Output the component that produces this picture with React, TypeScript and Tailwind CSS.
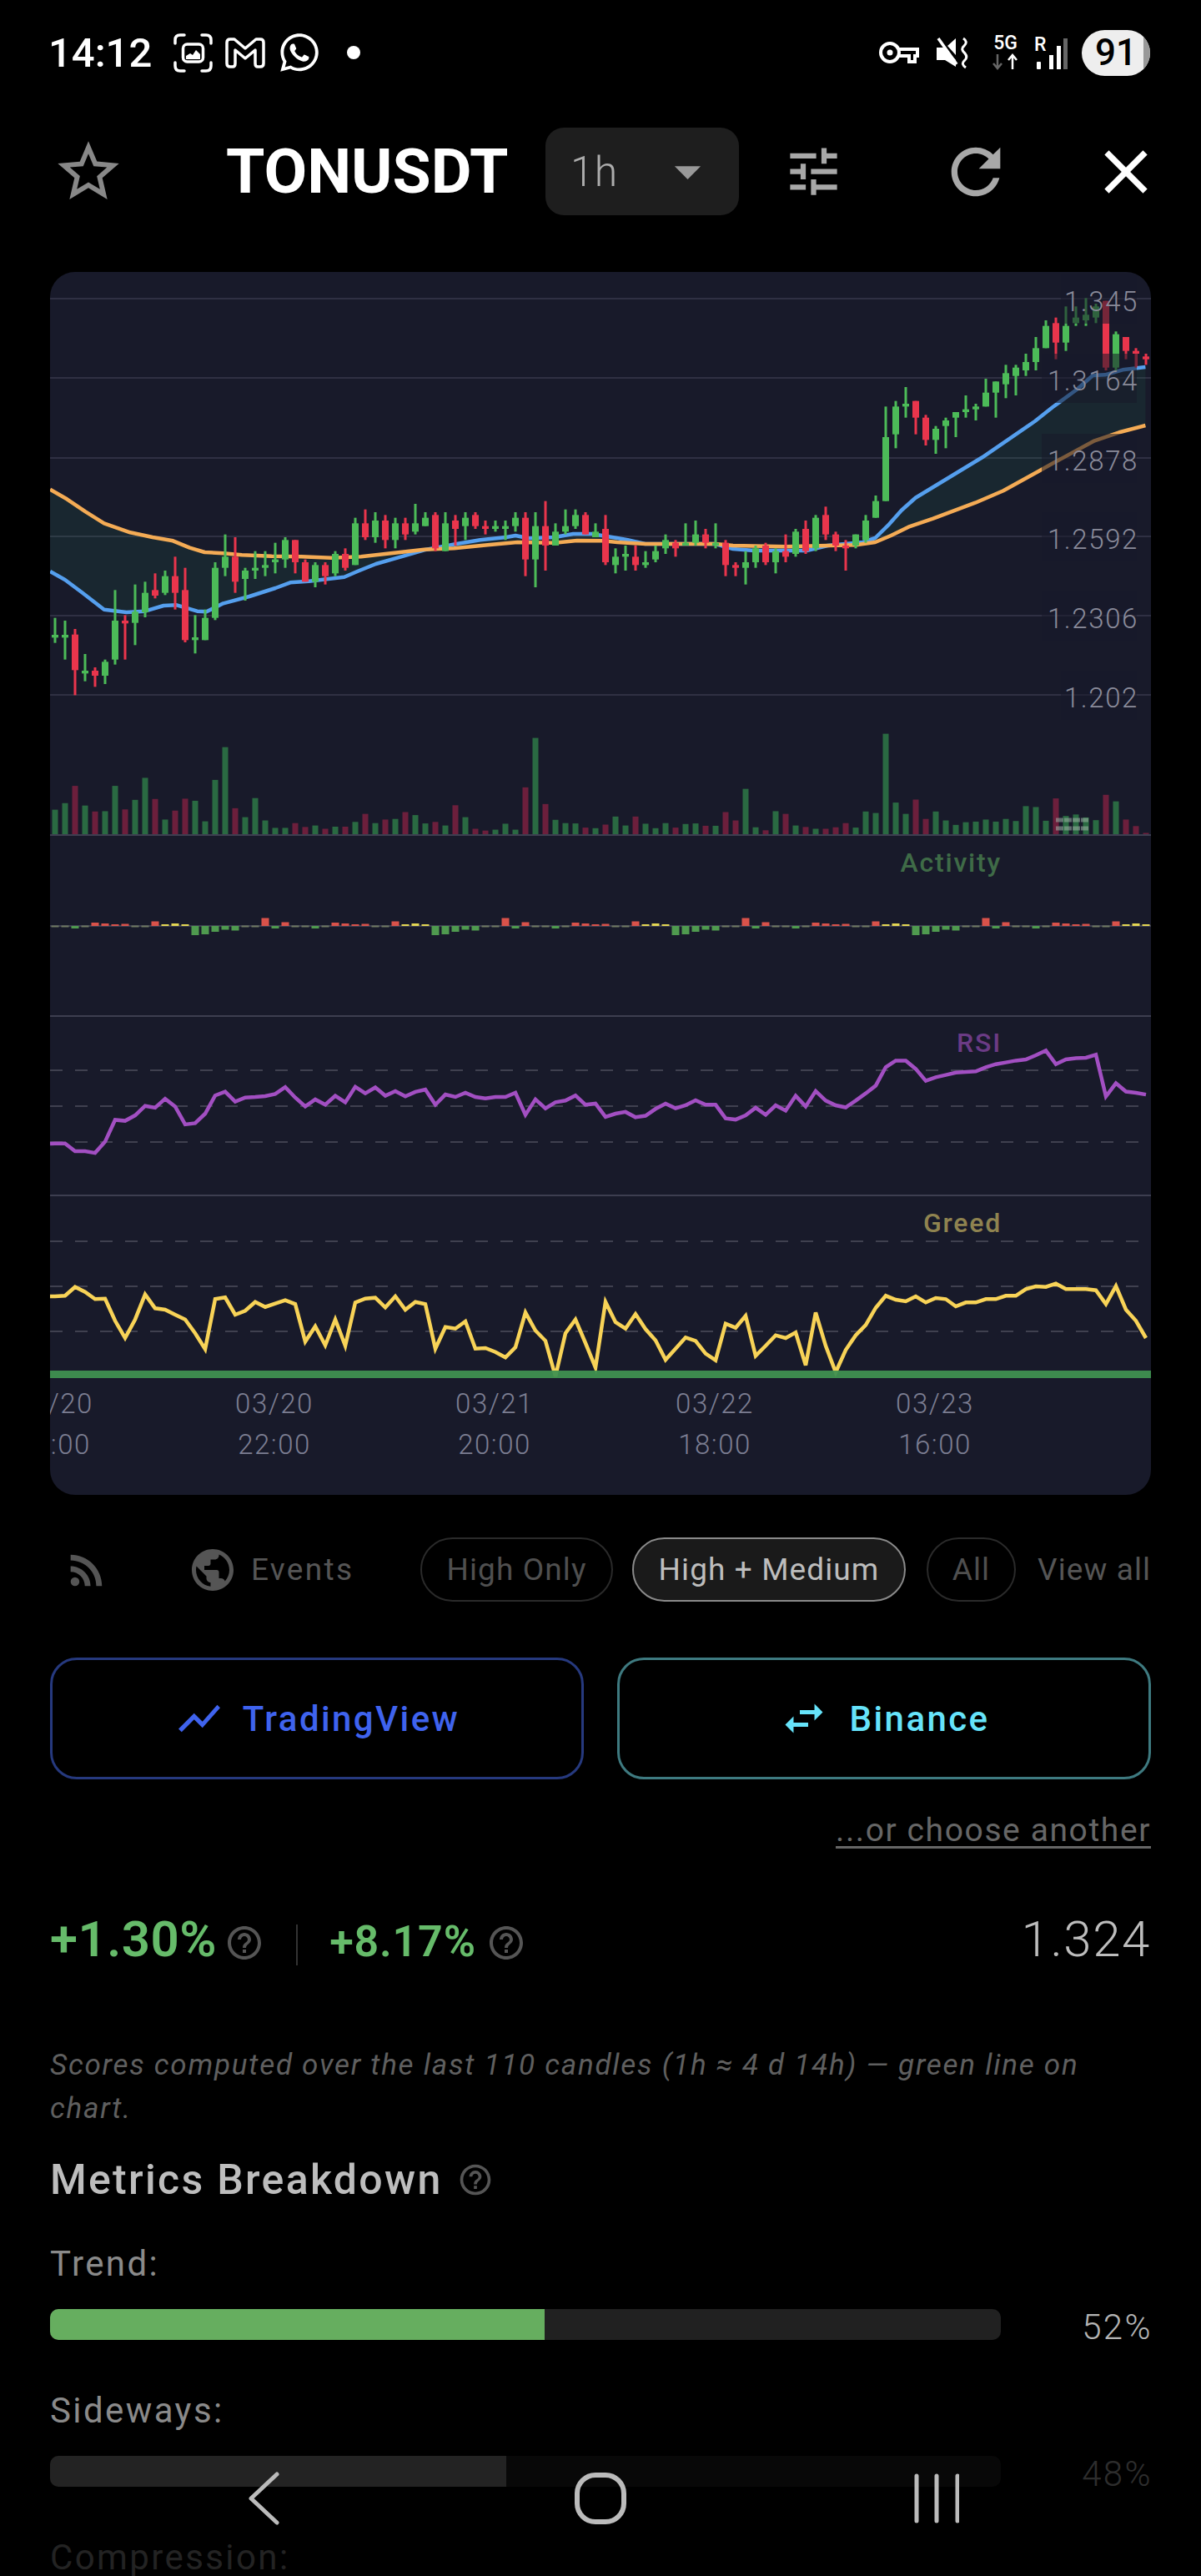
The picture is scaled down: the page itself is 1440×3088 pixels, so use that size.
import { FaWhatsapp } from "react-icons/fa"
import {
  MdArrowDropDown,
  MdClose,
  MdHelpOutline,
  MdPublic,
  MdRefresh,
  MdRssFeed,
  MdShowChart,
  MdStarBorder,
  MdSwapHoriz,
  MdTune,
} from "react-icons/md"

type Candle = [number, number, number, number, "g" | "r"]

// wick top, wick bottom, body top, body bottom (chart units, 1/3 px)
const candles: Candle[] = [
  [1262, 1352, 1323, 1333, "g"], [1272, 1412, 1323, 1333, "g"], [1302, 1540, 1322, 1450, "r"], [1392, 1490, 1452, 1462, "g"],
  [1440, 1510, 1452, 1470, "r"], [1412, 1500, 1420, 1470, "g"], [1162, 1430, 1272, 1412, "g"], [1252, 1412, 1272, 1282, "r"],
  [1142, 1360, 1240, 1280, "g"], [1132, 1260, 1172, 1242, "g"], [1102, 1192, 1162, 1182, "r"], [1092, 1180, 1112, 1172, "g"],
  [1042, 1232, 1112, 1172, "r"], [1082, 1350, 1162, 1342, "r"], [1252, 1390, 1332, 1342, "g"], [1232, 1342, 1262, 1342, "g"],
  [1062, 1270, 1082, 1262, "g"], [962, 1112, 1042, 1082, "g"], [972, 1172, 1042, 1132, "r"], [1082, 1200, 1092, 1122, "g"],
  [1022, 1122, 1082, 1092, "g"], [1022, 1112, 1072, 1082, "g"], [992, 1102, 1052, 1062, "g"], [972, 1082, 982, 1052, "g"],
  [982, 1102, 982, 1062, "r"], [1052, 1132, 1062, 1132, "r"], [1062, 1152, 1072, 1132, "g"], [1062, 1142, 1072, 1112, "r"],
  [1022, 1112, 1032, 1102, "g"], [1012, 1092, 1032, 1082, "r"], [902, 1072, 922, 1072, "g"], [872, 982, 922, 972, "r"],
  [882, 992, 912, 972, "g"], [892, 1012, 912, 982, "r"], [902, 1012, 922, 982, "g"], [902, 982, 922, 962, "r"],
  [852, 962, 922, 952, "g"], [882, 932, 902, 932, "g"], [882, 1022, 892, 1012, "r"], [882, 1022, 922, 1022, "g"],
  [892, 1002, 912, 942, "r"], [882, 982, 902, 932, "g"], [882, 942, 892, 932, "r"], [912, 962, 932, 942, "r"],
  [912, 952, 932, 942, "g"], [912, 982, 932, 942, "g"], [882, 952, 902, 932, "g"], [882, 1112, 902, 1052, "r"],
  [882, 1152, 932, 1052, "g"], [842, 1092, 932, 1002, "r"], [922, 1002, 952, 1002, "g"], [872, 962, 932, 952, "g"],
  [872, 942, 892, 932, "g"], [882, 962, 892, 962, "r"], [922, 972, 952, 972, "g"], [892, 1072, 942, 1062, "r"],
  [1012, 1102, 1042, 1072, "g"], [1002, 1092, 1032, 1042, "g"], [1002, 1092, 1042, 1072, "r"], [1022, 1082, 1062, 1072, "g"],
  [1002, 1062, 1022, 1052, "g"], [962, 1032, 982, 1012, "g"], [982, 1042, 992, 1012, "r"], [922, 1002, 992, 1002, "g"],
  [912, 1002, 962, 992, "g"], [942, 1012, 962, 992, "r"], [922, 1012, 992, 1002, "g"], [982, 1112, 992, 1072, "r"],
  [1062, 1112, 1072, 1082, "r"], [1022, 1142, 1062, 1082, "g"], [1002, 1082, 1012, 1062, "g"], [992, 1072, 1002, 1062, "r"],
  [1012, 1102, 1022, 1062, "g"], [962, 1062, 1022, 1042, "r"], [942, 1042, 952, 1032, "g"], [912, 1032, 942, 1022, "r"],
  [892, 1022, 902, 1012, "g"], [862, 982, 892, 962, "r"], [952, 1022, 962, 1002, "r"], [982, 1092, 1002, 1012, "r"],
  [962, 1012, 962, 1002, "g"], [892, 992, 912, 982, "g"], [822, 902, 842, 902, "g"], [502, 842, 612, 842, "g"],
  [482, 652, 502, 602, "g"], [432, 542, 492, 502, "g"], [482, 602, 482, 542, "r"], [532, 642, 542, 622, "r"],
  [572, 672, 582, 622, "g"], [542, 652, 552, 572, "g"], [522, 612, 522, 542, "g"], [462, 542, 512, 522, "g"],
  [492, 552, 502, 512, "g"], [402, 502, 452, 502, "g"], [412, 542, 412, 452, "g"], [352, 472, 382, 422, "g"],
  [352, 462, 362, 392, "g"], [312, 392, 342, 372, "g"], [252, 372, 292, 342, "g"], [192, 292, 212, 292, "g"],
  [182, 332, 202, 272, "r"], [142, 302, 212, 272, "g"], [142, 212, 182, 202, "g"], [112, 212, 172, 192, "g"],
  [132, 202, 142, 182, "g"], [122, 372, 122, 362, "r"], [232, 372, 242, 362, "g"], [252, 332, 252, 302, "r"],
  [292, 362, 302, 312, "r"], [312, 352, 322, 332, "r"],
]

const volumeTops = [
  367, 345, 287, 353, 373, 372, 287, 366, 334, 260, 331, 400, 370, 330, 337, 406, 267, 157, 362, 392, 328, 403, 428, 428, 412, 425, 420, 431,
  424, 424, 408, 381, 412, 400, 398, 375, 385, 413, 408, 420, 352, 392, 431, 437, 434, 414, 434, 292, 126, 348, 401, 412, 413, 427, 429, 417, 390,
  420, 390, 414, 429, 412, 427, 415, 413, 421, 421, 375, 403, 297, 426, 436, 372, 381, 420, 425, 431, 431, 426, 412, 427, 373, 378, 112, 343, 381,
  333, 398, 373, 403, 418, 409, 407, 400, 407, 398, 405, 355, 358, 404, 329, 388, 383, 393, 402, 317, 339, 400, 422, 445,
]
const volumeRed = new Set([2, 4, 7, 10, 12, 13, 18, 24, 25, 27, 29, 31, 33, 35, 38, 40, 42, 43, 47, 49, 53, 55, 58, 62, 65, 67, 68, 71, 73, 75, 77, 78, 79, 86, 87, 100, 105, 107, 108, 109])

const activityPattern = [0.5, 0.5, -3, 0.5, 4, 3, 2, 2.5, 0.5, 0.5, 5.5, 2, 3, 2, -11, -10, -7, -4.5, -5.5, -0.5, -0.5, 9.5, -3, 4.5]

const rsiValues = [
  1486, 1486, 1512, 1512, 1518, 1480, 1407, 1410, 1392, 1360, 1366, 1336, 1362, 1422, 1418, 1386, 1325, 1312, 1346, 1332, 1330, 1327, 1320, 1297, 1332, 1362, 1338, 1356,
  1326, 1348, 1296, 1318, 1298, 1326, 1310, 1328, 1313, 1305, 1356, 1322, 1330, 1316, 1330, 1335, 1330, 1330, 1316, 1390, 1338, 1368, 1348, 1342, 1325, 1356, 1352, 1397, 1386,
  1380, 1398, 1393, 1370, 1352, 1368, 1358, 1341, 1356, 1356, 1402, 1406, 1392, 1366, 1390, 1358, 1376, 1326, 1362, 1310, 1342, 1358, 1365, 1342, 1318, 1292, 1230, 1208, 1208, 1236,
  1276, 1264, 1256, 1248, 1246, 1244, 1230, 1220, 1214, 1208, 1204, 1190, 1174, 1220, 1204, 1200, 1198, 1188, 1328, 1284, 1312, 1316, 1322,
]

const greedValues = [
  462, 460, 428, 446, 472, 470, 550, 612, 545, 455, 505, 510, 528, 545, 595, 652, 472, 466, 528, 514, 482, 500, 488, 476, 490, 625, 570, 638,
  545, 640, 484, 470, 467, 502, 462, 510, 482, 490, 650, 572, 578, 552, 650, 648, 662, 682, 645, 520, 585, 622, 750, 595, 545, 630, 718, 482, 555,
  578, 526, 580, 620, 690, 650, 610, 622, 668, 692, 560, 575, 532, 676, 640, 602, 612, 592, 710, 520, 640, 735, 655, 602, 565, 503, 460, 474, 480, 462,
  484, 468, 472, 498, 484, 484, 472, 472, 460, 460, 436, 426, 428, 416, 436, 436, 436, 440, 490, 425, 510, 550, 612,
]

const left = (x: number, y: number) => [40 + x / 2.24, 320 + y / 3]
const right = (x: number, y: number) => [740 + x / 2.376, 320 + y / 3]

const slowMa = [
  left(45, 800), left(90, 835), left(140, 880), left(190, 922), left(260, 955), left(320, 972), left(375, 985), left(420, 1010), left(460, 1026), left(510, 1030),
  left(560, 1036), left(640, 1040), left(720, 1042), left(800, 1046), left(880, 1042), left(960, 1030), left(1050, 1016), left(1130, 1012), left(1220, 1000),
  left(1300, 990), left(1400, 992), left(1460, 984), left(1530, 985),
  right(0, 990), right(80, 996), right(140, 996), right(280, 996), right(330, 1002), right(480, 1006), right(600, 1002), right(680, 1000), right(735, 990), right(780, 966),
  right(830, 935), right(900, 905), right(1020, 848), right(1100, 805), right(1200, 735), right(1250, 700), right(1360, 625), right(1430, 595), right(1505, 570),
]

const fastMa = [
  left(45, 1095), left(85, 1125), left(130, 1170), left(190, 1232), left(250, 1242), left(300, 1238), left(350, 1218), left(385, 1216), left(440, 1238), left(465, 1240),
  left(510, 1210), left(580, 1185), left(650, 1155), left(690, 1135), left(740, 1130), left(835, 1115), left(870, 1095), left(920, 1068), left(980, 1045), left(1050, 1018),
  left(1140, 995), left(1200, 982), left(1270, 972), left(1295, 966), left(1330, 976), left(1400, 972), left(1450, 960), left(1500, 960),
  right(0, 975), right(30, 982), right(80, 996), right(280, 996), right(330, 1014), right(390, 1020), right(540, 1020), right(600, 1002), right(700, 990), right(735, 975),
  right(775, 925), right(810, 875), right(850, 830), right(1040, 685), right(1190, 555), right(1240, 505), right(1310, 440), right(1355, 390), right(1390, 388), right(1440, 370), right(1505, 360),
]

const toPoints = (pts: number[][]) => pts.map((p) => `${p[0].toFixed(1)},${p[1].toFixed(1)}`).join(" ")
const candleX = (i: number) => 66 + 12 * i

const priceLabels = [
  { label: "1.345", grid: 358, boxX: 1272 },
  { label: "1.3164", grid: 453, boxX: 1249 },
  { label: "1.2878", grid: 549, boxX: 1249 },
  { label: "1.2592", grid: 643, boxX: 1249 },
  { label: "1.2306", grid: 738, boxX: 1249 },
  { label: "1.202", grid: 833, boxX: 1272 },
]

const timeLabels = [
  { date: "03/20", time: "16:00", x: 65 },
  { date: "03/20", time: "22:00", x: 329 },
  { date: "03/21", time: "20:00", x: 593 },
  { date: "03/22", time: "18:00", x: 857 },
  { date: "03/23", time: "16:00", x: 1121 },
]

function Chart() {
  return (
    <div className="mx-[60px] mt-[68px] h-[1466px] overflow-hidden rounded-[30px] bg-[#181a2a]">
      <svg width="1320" height="1466" viewBox="60 326 1320 1466" className="block">
        {[358, 453, 549, 643, 738, 833].map((y) => (
          <line key={y} x1="60" x2="1380" y1={y} y2={y} stroke="#2f3043" strokeWidth="2" />
        ))}
        <polygon points={toPoints([...fastMa, ...[...slowMa].reverse()])} fill="#2bb673" fillOpacity="0.09" />
        <polyline points={toPoints(fastMa)} fill="none" stroke="#559fee" strokeWidth="4.5" strokeLinejoin="round" />
        <polyline points={toPoints(slowMa)} fill="none" stroke="#f4ab55" strokeWidth="4.5" strokeLinejoin="round" />

        {candles.map((c, i) => {
          const color = c[4] === "g" ? "#4cbb58" : "#e9354c"
          const x = candleX(i)
          return (
            <g key={i} fill={color}>
              <rect x={x - 1.5} y={320 + c[0] / 3} width="3" height={(c[1] - c[0]) / 3} />
              <rect x={x - 4} y={320 + c[2] / 3} width="8" height={(c[3] - c[2]) / 3} />
            </g>
          )
        })}

        {priceLabels.map((p) => (
          <g key={p.label}>
            <rect x={p.boxX} y={p.grid - 29} width={1363 - p.boxX} height="59" fill="#181a2a" fillOpacity="0.55" />
            <text x="1365" y={p.grid + 15} textAnchor="end" fill="#8a8b9a" className="text-[33px] font-light tracking-[1.6px]">
              {p.label}
            </text>
          </g>
        ))}

        {/* volume */}
        {volumeTops.map((top, i) => {
          const h = (452 - top) / 2.8
          return <rect key={i} x={candleX(i) - 3.5} y={1001 - h} width="7" height={h} fill={volumeRed.has(i) ? "#6c1f3c" : "#2a6a42"} />
        })}
        <line x1="60" x2="1380" y1="1001" y2="1001" stroke="#3d3e50" strokeWidth="2" />
        <line x1="1266" x2="1306" y1="983" y2="983" stroke="#9fb5a8" strokeOpacity="0.55" strokeWidth="5" strokeDasharray="9 1" />
        <line x1="1266" x2="1306" y1="993" y2="993" stroke="#9fb5a8" strokeOpacity="0.55" strokeWidth="5" strokeDasharray="9 1" />

        {/* activity */}
        <text x="1201" y="1045" textAnchor="end" fill="#3f6b47" className="text-[32px] font-medium tracking-[1.8px]">
          Activity
        </text>
        <line x1="60" x2="1380" y1="1110" y2="1110" stroke="#3d3e50" strokeWidth="2" />
        {candles.map((_, i) => {
          const h = activityPattern[i % 24]
          const idx = i % 24
          const isThin = Math.abs(h) < 1
          const color = isThin ? "#6f7a62" : h < 0 ? "#4f9a4f" : idx >= 11 && idx <= 13 ? "#e3d653" : "#d9524a"
          if (isThin) return <rect key={i} x={candleX(i) - 4.5} y={1109.5} width="9" height="2" fill={color} />
          return <rect key={i} x={candleX(i) - 4.5} y={h > 0 ? 1110 - h : 1110} width="9" height={Math.abs(h)} fill={color} />
        })}
        <line x1="60" x2="1380" y1="1218" y2="1218" stroke="#3d3e50" strokeWidth="2" />

        {/* rsi */}
        {[1283, 1326, 1369].map((y) => (
          <line key={y} x1="60" x2="1366" y1={y} y2={y} stroke="#3f404f" strokeWidth="2" strokeDasharray="15 15" />
        ))}
        <text x="1201" y="1261" textAnchor="end" fill="#6b3b85" className="text-[32px] font-medium tracking-[1.8px]">
          RSI
        </text>
        <polyline
          points={toPoints([[60, 840 + 1487 / 2.8], ...rsiValues.map((v, i) => [candleX(i), 840 + v / 2.8])])}
          fill="none"
          stroke="#a24fc2"
          strokeWidth="4.5"
        />
        <line x1="60" x2="1380" y1="1433" y2="1433" stroke="#3d3e50" strokeWidth="2" />

        {/* greed */}
        {[1488, 1542, 1596].map((y) => (
          <line key={y} x1="60" x2="1366" y1={y} y2={y} stroke="#3f404f" strokeWidth="2" strokeDasharray="15 15" />
        ))}
        <text x="1201" y="1477" textAnchor="end" fill="#8f8350" className="text-[32px] font-medium tracking-[1.8px]">
          Greed
        </text>
        <polyline
          points={toPoints([[60, 1400 + 462 / 3], ...greedValues.map((v, i) => [candleX(i), 1400 + v / 3])])}
          fill="none"
          stroke="#f8d357"
          strokeWidth="4.5"
        />
        <rect x="60" y="1643" width="1320" height="9" fill="#3f9150" fillOpacity="0.95" />

        {timeLabels.map((t) => (
          <g key={t.x} fill="#7c7e92" textAnchor="middle" className="text-[33px] font-light tracking-[1.5px]">
            <text x={t.x} y="1694">{t.date}</text>
            <text x={t.x} y="1743">{t.time}</text>
          </g>
        ))}
      </svg>
    </div>
  )
}

function FrameIcon() {
  return (
    <svg width="47" height="47" viewBox="0 0 47 47" className="ml-[26px] shrink-0" fill="none" stroke="#fff" strokeWidth="3.5" strokeLinecap="round">
      <path d="M2 12V8Q2 2 8 2H13M34 2H39Q45 2 45 8V12M45 35V39Q45 45 39 45H34M13 45H8Q2 45 2 39V35" />
      <rect x="11.5" y="13" width="24" height="21" rx="5" />
      <path d="M15 31L15 27L20 24L23 26L27 20L32 25V31Z" fill="#fff" stroke="none" />
    </svg>
  )
}

function MailIcon() {
  return (
    <svg width="48" height="37" viewBox="0 0 48 37" className="ml-[15px] shrink-0" fill="none" stroke="#fff" strokeWidth="3.5" strokeLinejoin="round">
      <path d="M2 6Q2 2 6 2H11L24 13L37 2H42Q46 2 46 6V31Q46 35 42 35H39Q36 35 36 31V15L24 25L12 15V31Q12 35 9 35H6Q2 35 2 31Z" />
    </svg>
  )
}

function KeyIcon() {
  return (
    <svg width="48" height="28" viewBox="0 0 48 28" className="shrink-0" fill="none" stroke="#fff" strokeWidth="4">
      <circle cx="13" cy="14" r="11" />
      <circle cx="13" cy="14" r="3.5" fill="#fff" stroke="none" />
      <path d="M24 10H46V18H43V25H36V18H24" />
    </svg>
  )
}

function MuteIcon() {
  return (
    <svg width="40" height="39" viewBox="0 0 40 39" className="ml-[20px] shrink-0">
      <path d="M1 13H9L13 16L24 28V36L11 28H1Z" fill="#fff" />
      <path d="M14 11L24 2V22Z" fill="#fff" />
      <path d="M3 2L25 33" stroke="#fff" strokeWidth="3.5" />
      <path d="M33 2Q39 6 34 11Q29 15 35 20Q39 25 34 29Q30 33 36 37" fill="none" stroke="#fff" strokeWidth="3" />
    </svg>
  )
}

function NetworkIcon() {
  return (
    <div className="ml-[27px] flex w-[33px] shrink-0 flex-col items-center">
      <span className="text-[23px] font-medium leading-[20px] text-white">5G</span>
      <svg width="33" height="20" viewBox="0 0 33 20" className="mt-[2px]">
        <path d="M7 1V17M2 12L7 18L12 12" fill="none" stroke="#666" strokeWidth="2.5" />
        <path d="M25 19V3M20 8L25 2L30 8" fill="none" stroke="#fff" strokeWidth="2.5" />
      </svg>
    </div>
  )
}

function SignalIcon() {
  return (
    <div className="ml-[18px] flex h-[39px] w-[40px] shrink-0 items-end justify-between">
      <div className="flex h-full w-[15px] flex-col items-start justify-between">
        <span className="text-[23px] font-medium leading-[20px] text-white">R</span>
        <span className="ml-[3px] h-[9px] w-[5px] rounded-[1px] bg-white" />
      </div>
      <span className="h-[17px] w-[5px] bg-white" />
      <span className="h-[28px] w-[5px] bg-white" />
      <span className="h-[37px] w-[5px] bg-[#666666]" />
    </div>
  )
}

function StatusBar() {
  return (
    <div className="flex h-[126px] items-center pl-[58px] pr-[61px] text-white">
      <span className="w-[124px] shrink-0 whitespace-nowrap text-[49px] font-medium leading-none">14:12</span>
      <FrameIcon />
      <MailIcon />
      <FaWhatsapp className="ml-[15px] shrink-0 text-[52px]" />
      <span className="ml-[31px] size-4 shrink-0 rounded-full bg-white" />
      <div className="flex-1" />
      <KeyIcon />
      <MuteIcon />
      <NetworkIcon />
      <SignalIcon />
      <div className="relative ml-[17px] flex h-[55px] w-[82px] shrink-0 items-center justify-center overflow-hidden rounded-full bg-[#eeeeee]">
        <span className="absolute inset-y-0 right-0 w-2 bg-[#999999]" />
        <span className="text-[44px] font-medium leading-none text-black">91</span>
      </div>
    </div>
  )
}

function Header() {
  return (
    <div className="mt-[27px] flex h-[105px] items-center pl-[62px]">
      <MdStarBorder className="shrink-0 text-[88px] text-[#888888]" />
      <span className="ml-[121px] w-[338px] shrink-0 whitespace-nowrap text-[75px] font-bold leading-none text-white">TONUSDT</span>
      <div className="ml-[45px] flex h-[105px] w-[232px] shrink-0 items-center rounded-[22px] bg-[#1e1e1e] pl-[30px] text-[#adadad]">
        <span className="text-[50px] font-light leading-none tracking-[1px]">1h</span>
        <MdArrowDropDown className="ml-[46px] text-[75px] text-[#999999]" />
      </div>
      <MdTune className="ml-[52px] shrink-0 text-[75px] text-[#a8a8a8]" />
      <MdRefresh className="ml-[113px] shrink-0 text-[88px] text-[#a8a8a8]" />
      <MdClose className="ml-[92px] shrink-0 text-[88px] text-white" />
    </div>
  )
}

function FilterRow() {
  return (
    <div className="mt-[51px] flex h-[77px] items-center pl-[75px] text-[37px] tracking-[1.1px] text-[#555555]">
      <MdRssFeed className="shrink-0 text-[58px]" />
      <MdPublic className="ml-[92px] shrink-0 text-[60px]" />
      <span className="ml-[16px] w-[126px] shrink-0 whitespace-nowrap tracking-[2.3px]">Events</span>
      <span className="ml-[77px] flex h-[77px] w-[231px] shrink-0 items-center justify-center rounded-full border-2 border-[#2a2a2a] text-[#4f4f4f]">High Only</span>
      <span className="ml-[23px] flex h-[77px] w-[328px] shrink-0 items-center justify-center rounded-full border-2 border-[#8a8a8a] bg-[#1a1a1a] text-[#bdbdbd]">High + Medium</span>
      <span className="ml-[25px] flex h-[77px] w-[107px] shrink-0 items-center justify-center rounded-full border-2 border-[#2a2a2a] text-[#4f4f4f]">All</span>
      <span className="ml-[26px] shrink-0 whitespace-nowrap">View all</span>
    </div>
  )
}

function HelpIcon({ className }: { className: string }) {
  return <MdHelpOutline className={className} />
}

function Metric({ label, value, fill, width, topClass }: { label: string; value: string; fill: string; width: number; topClass: string }) {
  return (
    <div className={topClass}>
      <div className="text-[42px] leading-[50px] tracking-[2.4px] text-[#8a8a8a]">{label}</div>
      <div className="mt-[29px] flex h-[37px] items-center">
        <div className="h-[37px] w-[1140px] shrink-0 overflow-hidden rounded-[10px] bg-[#212121]">
          <div className={`h-full ${fill}`} style={{ width: `${width}%` }} />
        </div>
        <span className="ml-auto mr-[-2px] mt-[6px] text-[42px] font-light leading-[50px] tracking-[2.4px] text-[#b4b4b4]">{value}</span>
      </div>
    </div>
  )
}

function NavBar() {
  return (
    <div className="absolute inset-x-0 bottom-0 flex h-[152px] items-start bg-black/75 pl-[298px] pt-[27px]">
      <svg width="40" height="64" viewBox="0 0 40 64" fill="none" stroke="#bbbbbb" strokeWidth="5" strokeLinecap="round" strokeLinejoin="round">
        <path d="M34 3L3 32L34 61" />
      </svg>
      <svg width="64" height="64" viewBox="0 0 64 64" className="ml-[350px]" fill="none" stroke="#bbbbbb" strokeWidth="6">
        <rect x="4" y="4" width="56" height="56" rx="22" />
      </svg>
      <svg width="54" height="60" viewBox="0 0 54 60" className="ml-[344px] mt-[2px]" fill="none" stroke="#bbbbbb" strokeWidth="5" strokeLinecap="round">
        <path d="M3 3V57M27 3V57M52 3V57" />
      </svg>
    </div>
  )
}

export default function App() {
  return (
    <div className="relative h-[3088px] w-[1440px] overflow-hidden bg-black [font-family:Roboto,sans-serif]">
      <StatusBar />
      <Header />
      <Chart />
      <FilterRow />

      <div className="mx-[60px] mt-[67px] grid grid-cols-2 gap-[40px]">
        <button className="flex h-[146px] items-center justify-center gap-[22px] rounded-[32px] border-[3px] border-[#26397e] text-[42px] font-medium tracking-[2.4px] text-[#3f63ee]">
          <MdShowChart className="text-[60px]" />
          TradingView
        </button>
        <button className="flex h-[146px] items-center justify-center gap-[25px] rounded-[32px] border-[3px] border-[#3e7a80] text-[42px] font-medium tracking-[2.4px] text-[#66e3fa]">
          <MdSwapHoriz className="text-[60px]" />
          Binance
        </button>
      </div>

      <div className="mx-[60px] mt-[38px] text-right text-[39px] leading-[46px] tracking-[1.6px] text-[#666666] underline underline-offset-[6px]">...or choose another</div>

      <div className="mx-[60px] mt-[73px] flex items-baseline leading-[70px]">
        <span className="text-[60px] font-semibold tracking-[0.5px] text-[#66bb6a]">+1.30%</span>
        <HelpIcon className="ml-[9px] mt-[4px] self-center text-[48px] text-[#555555]" />
        <span className="ml-[38px] mt-[9px] h-[49px] w-[2px] self-center bg-[#333333]" />
        <span className="ml-[38px] text-[52px] font-semibold tracking-[0.8px] text-[#66bb6a]">+8.17%</span>
        <HelpIcon className="ml-[12px] mt-[4px] self-center text-[48px] text-[#555555]" />
        <span className="ml-auto text-[60px] font-light tracking-[1.6px] text-[#bdbdbd]">1.324</span>
      </div>

      <p className="mx-[60px] mt-[87px] text-[35px] italic leading-[52px] tracking-[1.75px] text-[#5f5f5f]">
        Scores computed over the last 110 candles (1h ≈ 4 d 14h) — green line on chart.
      </p>

      <div className="mx-[60px] mt-[29px] flex h-[60px] items-center">
        <span className="text-[50px] font-medium leading-[60px] tracking-[2.3px] text-[#bdbdbd]">Metrics Breakdown</span>
        <HelpIcon className="ml-[17px] text-[44px] text-[#555555]" />
      </div>

      <div className="mx-[60px]">
        <Metric label="Trend:" value="52%" fill="bg-[#66ae5f]" width={52} topClass="mt-[46px]" />
        <Metric label="Sideways:" value="48%" fill="bg-[#8a8a8a]" width={48} topClass="mt-[60px]" />
        <Metric label="Compression:" value="32%" fill="bg-[#8a8a8a]" width={32} topClass="mt-[60px]" />
      </div>

      <NavBar />
    </div>
  )
}
